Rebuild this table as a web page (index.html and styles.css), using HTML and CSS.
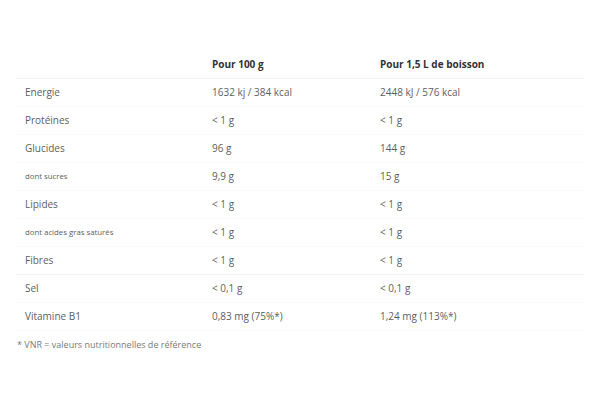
FILE: index.html
```html
<!DOCTYPE html>
<html lang="fr">
<head>
<meta charset="utf-8">
<link rel="stylesheet" href="styles.css">
</head>
<body>
<div class="wrap">
  <table class="nutri">
    <colgroup><col class="c1"><col class="c2"><col class="c3"></colgroup>
    <thead>
      <tr><th></th><th>Pour 100 g</th><th>Pour 1,5 L de boisson</th></tr>
    </thead>
    <tbody>
      <tr><td>Energie</td><td>1632 kj / 384 kcal</td><td>2448 kJ / 576 kcal</td></tr>
      <tr><td>Protéines</td><td>&lt; 1 g</td><td>&lt; 1 g</td></tr>
      <tr><td>Glucides</td><td>96 g</td><td>144 g</td></tr>
      <tr class="sub"><td>dont sucres</td><td>9,9 g</td><td>15 g</td></tr>
      <tr><td>Lipides</td><td>&lt; 1 g</td><td>&lt; 1 g</td></tr>
      <tr class="sub"><td>dont acides gras saturés</td><td>&lt; 1 g</td><td>&lt; 1 g</td></tr>
      <tr class="sep"><td>Fibres</td><td>&lt; 1 g</td><td>&lt; 1 g</td></tr>
      <tr><td>Sel</td><td>&lt; 0,1 g</td><td>&lt; 0,1 g</td></tr>
      <tr><td>Vitamine B1</td><td>0,83 mg (75%*)</td><td>1,24 mg (113%*)</td></tr>
    </tbody>
  </table>
  <p class="note">* VNR = valeurs nutritionnelles de référence</p>
</div>
</body>
</html>
```
FILE: styles.css
```css
html, body {
  margin: 0;
  padding: 0;
  background: #fff;
}
body {
  font-family: "Open Sans", "Liberation Sans", sans-serif;
  font-size: 10px;
  color: #5e5e5e;
}
.wrap {
  padding: 50px 16px 0 16px;
}
.nutri {
  width: 568px;
  border-collapse: collapse;
  table-layout: fixed;
}
.c1 { width: 187px; }
.c2 { width: 168px; }
.c3 { width: 213px; }
.nutri th,
.nutri td {
  height: 28px;
  padding: 0 0 0 9px;
  text-align: left;
  vertical-align: middle;
  line-height: 14px;
  box-sizing: border-box;
}
.nutri th {
  font-weight: 700;
  color: #333;
  border-bottom: 1px solid #f3f3f3;
}
.nutri tbody td {
  border-bottom: 1px solid #fbfbfb;
}
.nutri tr.sub td:first-child {
  font-size: 7.8px;
}
.nutri tr.sep td {
  border-bottom: 1px solid #f3f3f3;
}
.note {
  margin: 8px 0 0 1px;
  font-size: 9px;
  line-height: 12px;
  color: #7a7a7a;
}
```
